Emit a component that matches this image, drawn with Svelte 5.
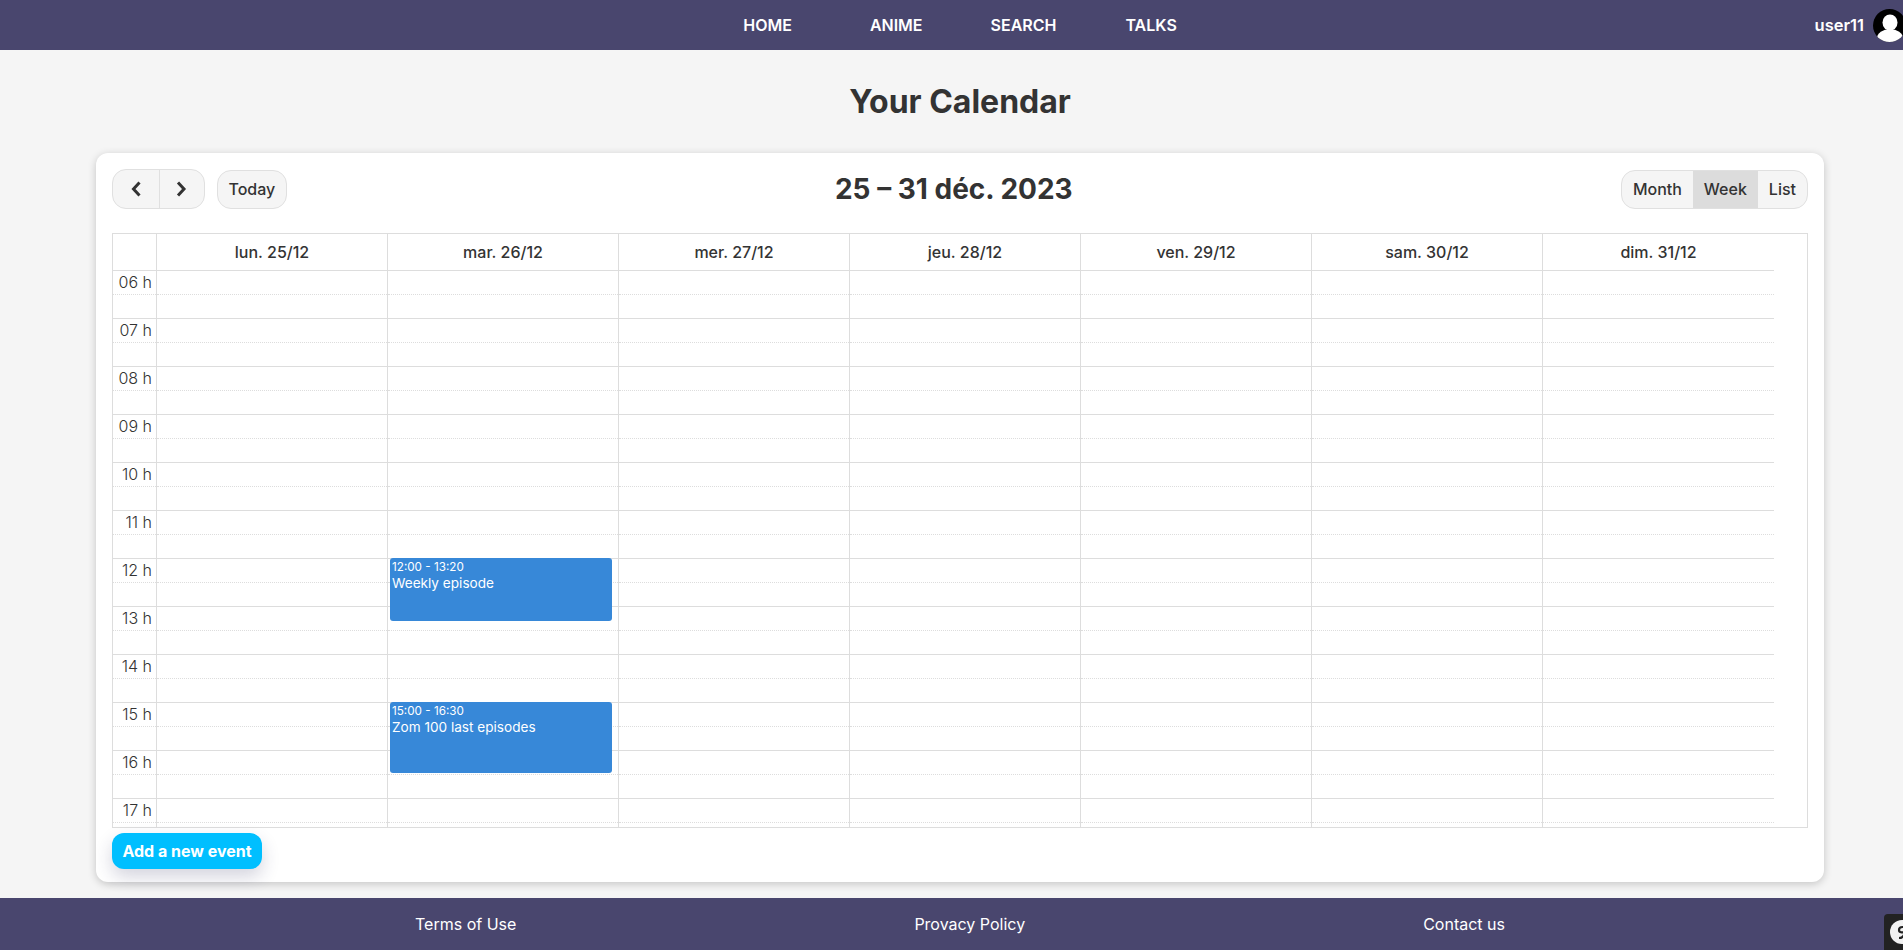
<script lang="ts">
    const links = ['HOME', 'ANIME', 'SEARCH', 'TALKS'];
    const days = ['lun. 25/12', 'mar. 26/12', 'mer. 27/12', 'jeu. 28/12', 'ven. 29/12', 'sam. 30/12', 'dim. 31/12'];
    const hours = ['06', '07', '08', '09', '10', '11', '12', '13', '14', '15', '16', '17'];
    const views = ['Month', 'Week', 'List'];
    const footerLinks = ['Terms of Use', 'Provacy Policy', 'Contact us'];

    // one hour is 48px, the grid starts at 06:00
    const events = [
        { day: 1, start: 12, end: 13 + 20 / 60, time: '12:00 - 13:20', title: 'Weekly episode' },
        { day: 1, start: 15, end: 16.5, time: '15:00 - 16:30', title: 'Zom 100 last episodes' }
    ];
    const hourHeight = 48;
</script>

<div class="page">
    <nav class="topbar">
        <div></div>
        <ul class="links">
            {#each links as link}
                <li>{link}</li>
            {/each}
        </ul>
        <div class="user">
            <span>user11</span>
            <svg class="avatar" viewBox="0 0 33 33" width="33" height="33">
                <defs>
                    <clipPath id="avatar-clip"><circle cx="16.5" cy="16.5" r="16.5" /></clipPath>
                </defs>
                <circle cx="16.5" cy="16.5" r="16.5" fill="#000" />
                <g clip-path="url(#avatar-clip)" fill="#fff">
                    <ellipse cx="17" cy="13.5" rx="7.5" ry="8" />
                    <ellipse cx="17" cy="29" rx="13" ry="9" />
                </g>
            </svg>
        </div>
    </nav>

    <main>
        <h1>Your Calendar</h1>

        <section class="card">
            <header class="toolbar">
                <div class="left">
                    <div class="group nav-group">
                        <button aria-label="Previous">
                            <svg viewBox="0 0 14 18" width="14" height="18"><path d="M10.5 2.5 L4.5 9 L10.5 15.5" /></svg>
                        </button>
                        <button aria-label="Next">
                            <svg viewBox="0 0 14 18" width="14" height="18"><path d="M3 2.5 L9 9 L3 15.5" /></svg>
                        </button>
                    </div>
                    <button class="today">Today</button>
                </div>
                <h2>25 – 31 déc. 2023</h2>
                <div class="group views">
                    {#each views as view}
                        <button class:active={view === 'Week'}>{view}</button>
                    {/each}
                </div>
            </header>

            <div class="calendar">
                <div class="head">
                    <div class="gutter"></div>
                    {#each days as day}
                        <div class="day-name">{day}</div>
                    {/each}
                </div>
                <div class="body">
                    <div class="gutter">
                        {#each hours as hour}
                            <div class="slot"><span class="label">{hour} h</span></div>
                            <div class="slot half"></div>
                        {/each}
                    </div>
                    {#each days as day, i}
                        <div class="day">
                            {#each hours as hour}
                                <div class="slot"></div>
                                <div class="slot half"></div>
                            {/each}
                            {#each events.filter((e) => e.day === i) as event}
                                <div
                                    class="event"
                                    style="top:{(event.start - 6) * hourHeight}px;height:{(event.end - event.start) * hourHeight - 1}px"
                                >
                                    <div class="event-time">{event.time}</div>
                                    <div class="event-title">{event.title}</div>
                                </div>
                            {/each}
                        </div>
                    {/each}
                </div>
            </div>

            <button class="add">Add a new event</button>
        </section>
    </main>

    <footer>
        {#each footerLinks as link}
            <span>{link}</span>
        {/each}
    </footer>

    <div class="badge">
        <svg viewBox="0 0 24 24" width="24" height="24">
            <circle cx="12" cy="12" r="12" fill="#f2f2f2" />
            <path d="M16 10 C16 6 9 6 9 10 C9 13 14 13 14.5 11 M14.5 10 C15 15 13 18 9 18" fill="none" stroke="#222" stroke-width="2.2" />
        </svg>
    </div>
</div>

<style>
    :global(body) {
        overflow: hidden;
        background: #f5f5f5;
        font-family: Inter, sans-serif;
        color: #333;
    }

    .page {
        position: relative;
        width: 1920px;
        height: 950px;
        display: flex;
        flex-direction: column;
        overflow: hidden;
    }

    .topbar {
        height: 50px;
        flex: none;
        display: grid;
        grid-template-columns: 1fr auto 1fr;
        align-items: center;
        background: #49466e;
        color: #fff;
        font-weight: 600;
        font-size: 16px;
    }

    .links {
        display: flex;
        gap: 68px;
        margin: 0;
        padding: 0;
        list-style: none;
    }

    .links li:first-child {
        margin-right: 10px;
    }

    .links li:last-child {
        margin-left: 1px;
    }

    .user {
        justify-self: end;
        display: flex;
        align-items: center;
        gap: 9px;
        padding-right: 14px;
        font-size: 16.5px;
    }

    .avatar {
        display: block;
    }

    main {
        flex: 1;
        display: flex;
        flex-direction: column;
        padding: 0 96px;
    }

    h1 {
        margin: 0;
        height: 103px;
        line-height: 103px;
        text-align: center;
        font-size: 32px;
        font-weight: 700;
        color: #333;
    }

    .card {
        height: 729px;
        box-sizing: border-box;
        padding: 16px 16px 0;
        background: #fff;
        border-radius: 12px;
        box-shadow: 0 2px 8px rgba(0, 0, 0, 0.2);
    }

    .toolbar {
        height: 40px;
        display: flex;
        justify-content: space-between;
        align-items: center;
    }

    .left {
        display: flex;
        align-items: center;
        gap: 12px;
    }

    h2 {
        margin: 0;
        font-size: 28px;
        font-weight: 700;
    }

    button {
        font-family: inherit;
        color: #333;
        cursor: pointer;
    }

    .group {
        display: flex;
        height: 40px;
        box-sizing: border-box;
        border: 1px solid #e0e0e0;
        border-radius: 14px;
        background: #f5f5f5;
        overflow: hidden;
    }

    .group button {
        border: none;
        background: none;
        font-size: 16px;
        font-weight: 500;
        padding: 0 11px;
    }

    .nav-group button {
        width: 46px;
        padding: 0;
        display: flex;
        align-items: center;
        justify-content: center;
    }

    .nav-group button + button {
        width: 45px;
        border-left: 1px solid #e0e0e0;
    }

    .nav-group path {
        fill: none;
        stroke: #333;
        stroke-width: 3;
    }

    .group button.active {
        background: #dcdcdc;
    }

    .views {
        height: 39px;
    }

    .today {
        height: 39px;
        padding: 0 10.5px;
        border: 1px solid #e0e0e0;
        border-radius: 14px;
        background: #f5f5f5;
        font-size: 16px;
        font-weight: 500;
    }

    .calendar {
        margin-top: 24px;
        height: 595px;
        box-sizing: border-box;
        border: 1px solid #ddd;
        overflow: hidden;
    }

    .head {
        height: 36px;
        display: flex;
    }

    .head .gutter {
        border-right: 1px solid #ddd;
        box-sizing: border-box;
    }

    .gutter {
        width: 44px;
        flex: none;
    }

    .day-name {
        width: 231px;
        box-sizing: border-box;
        border-right: 1px solid #ddd;
        display: flex;
        align-items: center;
        justify-content: center;
        font-size: 16px;
        font-weight: 500;
    }

    .day-name:last-child {
        border-right: none;
    }

    .body {
        display: flex;
        height: 557px;
        overflow: hidden;
    }

    .body .gutter,
    .day {
        border-right: 1px solid #ddd;
        box-sizing: border-box;
    }

    .day {
        position: relative;
        width: 231px;
    }

    .day:last-child {
        border-right: none;
    }

    .slot {
        height: 24px;
        box-sizing: border-box;
        border-top: 1px solid #ddd;
    }

    .half {
        border-top: 1px dotted #ddd;
    }

    .label {
        display: block;
        padding-right: 4px;
        text-align: right;
        font-size: 16px;
        line-height: 22px;
        font-weight: 300;
    }

    .event {
        position: absolute;
        left: 2px;
        width: 222px;
        box-sizing: border-box;
        padding: 2px;
        border-radius: 3px;
        background: #3788d8;
        color: #fff;
    }

    .event-time {
        font-size: 11.7px;
        line-height: 15px;
    }

    .event-title {
        font-size: 13.6px;
        line-height: 16px;
    }

    .add {
        display: block;
        margin-top: 5px;
        width: 150px;
        height: 36px;
        border: none;
        border-radius: 12px;
        background: #00bfff;
        color: #fff;
        font-size: 16px;
        font-weight: 700;
        box-shadow: 0 8px 18px rgba(40, 40, 90, 0.2);
    }

    footer {
        height: 52px;
        flex: none;
        display: flex;
        justify-content: center;
        align-items: center;
        gap: 398px;
        background: #49466e;
        color: #fff;
        font-size: 16px;
    }

    .badge {
        position: absolute;
        right: 0;
        bottom: 0;
        width: 36px;
        height: 36px;
        display: flex;
        align-items: center;
        justify-content: center;
        background: #222;
        border-top-left-radius: 4px;
    }

    .badge svg {
        display: block;
    }
</style>
